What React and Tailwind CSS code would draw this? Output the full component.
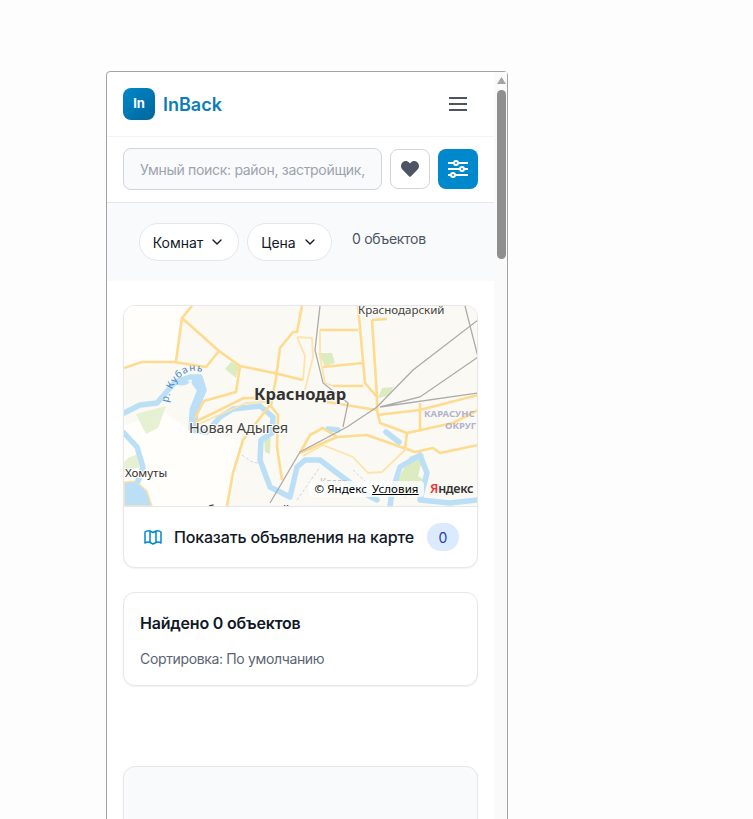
import React from "react";
import { ChevronDown } from "lucide-react";
import { FaHeart } from "react-icons/fa";

const FONT = "font-['Inter','Noto_Sans',sans-serif]";

const bigRoads = [
  "M0 62 L18 56 L50 56 L82 61 L95 45",
  "M68 0 L58 12 L52 55",
  "M58 12 L95 45 L116 60 L150 67 L179 74",
  "M178 0 L173 26 L169 26 L156 42 L152 72 L147 100",
  "M116 60 L112 86 L80 95 L71 112",
  "M234 0 L241 77 L253 91 L253 104 L203 96",
  "M234 24 L196 24 M239 57 L199 61",
  "M209 80 L239 80",
  "M248 14 L253 91 M248 14 L263 13",
  "M253 104 L256 117 L283 127 L329 117 L354 104",
  "M253 109 L296 104 L354 89",
  "M296 97 L296 124",
  "M283 127 L281 142",
  "M176 147 L186 129 L199 122 L213 131 L243 129 L291 146 L309 142 L316 147 L354 139",
  "M176 147 L213 131",
  "M146 99 L119 134 L109 167 L103 200",
  "M146 99 L154 109 L153 141 L158 174",
  "M143 92 L120 92 L71 116",
];

const thinRoads = [
  "M173 31 L188 32 L189 51 L181 84",
  "M173 31 L181 50 L179 74",
  "M196 24 L196 51 L201 77 L209 80",
  "M199 139 L229 151 L244 167 L258 166 L283 142",
  "M179 150 L199 139",
  "M75 118 L122 97 L143 96",
];

const rivers = [
  "M0 107 L16 99 L33 97 L51 76 L66 71 L76 71 L80 84 L70 104 L69 124 L83 126 L96 111 L109 103 L136 100 L149 111 L148 127 L137 134 L136 154 L146 181 L166 191 L173 161 L181 154 L196 154 L213 167 L240 187 L253 194",
  "M266 200 L268 186 L276 161 L296 149 L303 167 L296 194 L326 197 L354 194",
  "M0 127 L13 141 L19 161 L14 175",
  "M262 126 L275 136",
  "M204 123 L214 124",
];

const rails = [
  "M354 14 L289 64 L253 101 L223 121 L176 146 L146 197",
  "M354 51 L296 91 L256 101 L354 87",
  "M341 0 L354 51",
  "M196 0 L191 44 L199 77 L224 97 L219 121",
];

const CityMap = () => (
  <div className="relative h-[201px] overflow-hidden border-b border-[#e5e7eb]">
    <svg viewBox="0 0 354 200" className="block h-[200px] w-[354px]">
      <rect width="354" height="200" fill="#fbf9f4" />
      <path d="M0 0 H62 L52 56 L0 62 Z M0 120 L40 105 L70 128 L118 134 L105 200 H0 Z" fill="#fffefa" />
      <path d="M12 108 L42 100 L34 122 L22 128 Z M4 152 L16 147 L20 160 L0 166 V156 Z" fill="#e6f1d3" />
      <path d="M101 63 L107 56 L115 60 L112 72 Z M194 47 L208 47 L211 57 L201 60 Z M258 82 L270 81 L264 90 L254 92 Z M286 150 L300 148 L294 170 L303 176 L296 186 L280 192 L272 178 Z M140 132 L147 122 L146 148 L141 146 Z" fill="#dcecc0" />
      <path d="M0 176 L12 175 L23 185 L28 200 H0 Z" fill="#bbdff7" stroke="#fde3a8" strokeWidth="1.5" />
      {rivers.map((d) => (
        <path key={d} d={d} fill="none" stroke="#bbdff7" strokeWidth="5.5" strokeLinejoin="round" strokeLinecap="round" />
      ))}
      <path d="M72 76 L78 84 L70 104 L69 122" fill="none" stroke="#bbdff7" strokeWidth="9" strokeLinejoin="round" strokeLinecap="round" />
      <path d="M52 78 Q60 72 66 76 Q60 82 52 78 Z" fill="#bbdff7" />
      <path d="M118 149 L128 156 L140 158 M173 194 L196 161 M229 164 L244 178" fill="none" stroke="#d6cdec" strokeWidth="1" strokeDasharray="3 2" />
      {bigRoads.map((d) => (
        <path key={d} d={d} fill="none" stroke="#fedb8e" strokeWidth="2.6" strokeLinejoin="round" />
      ))}
      {thinRoads.map((d) => (
        <path key={d} d={d} fill="none" stroke="#fee3aa" strokeWidth="1.8" strokeLinejoin="round" />
      ))}
      {rails.map((d) => (
        <path key={d} d={d} fill="none" stroke="#adabaa" strokeWidth="1.3" />
      ))}
      <g fontFamily="'Noto Sans', sans-serif">
        <defs>
          <path id="kuban" d="M44 97 Q48 74 64 66 Q76 62 86 72" />
        </defs>
        <text fontSize="10" fill="#4a87c9" letterSpacing="0.8">
          <textPath href="#kuban">р. Кубань</textPath>
        </text>
        <text x="130" y="94" fontSize="16.5" fontWeight="700" fill="#333333" stroke="#fbf9f4" strokeWidth="2" paintOrder="stroke">Краснодар</text>
        <text x="65" y="127" fontSize="14.5" fill="#444444" stroke="#fffefa" strokeWidth="2" paintOrder="stroke">Новая Адыгея</text>
        <text x="1" y="171" fontSize="11.5" fill="#333333" stroke="#fffefa" strokeWidth="2" paintOrder="stroke">Хомуты</text>
        <text x="234" y="8" fontSize="11.5" fill="#444444" stroke="#fbf9f4" strokeWidth="2" paintOrder="stroke">Краснодарский</text>
        <text x="300" y="111" fontSize="9.5" fontWeight="700" fill="#b4b2cc">КАРАСУНС</text>
        <text x="321" y="123" fontSize="9.5" fontWeight="700" fill="#b4b2cc">ОКРУГ</text>
        <text x="196" y="180" fontSize="10" fill="#bcbcbc">Козет</text>
        <text x="73" y="210" fontSize="14.5" fill="#444444">Яблоновский</text>
      </g>
    </svg>
    <div className="absolute right-[53px] bottom-[9px] flex h-[16px] w-[115px] items-center justify-center gap-[5px] rounded-sm bg-white/80 font-['Noto_Sans',sans-serif] text-[11.5px] tracking-[0.1px] text-black">
      <span>© Яндекс</span>
      <span className="underline">Условия</span>
    </div>
    <div className="absolute right-[4px] bottom-[8px] font-['Noto_Sans',sans-serif] text-[12.5px] leading-[18px] font-semibold tracking-tight text-[#333333]">
      <span className="text-[#f0333c]">Я</span>ндекс
    </div>
  </div>
);

export default function App() {
  return (
    <div className={`h-screen overflow-hidden bg-[#fdfdfd] pt-[71px] pl-[106px] ${FONT}`}>
      <div className="flex h-[800px] w-[402px] rounded-t-[4px] border border-[#a3a3a3] bg-white">
        <div className="w-[387px] shrink-0">
          <header className="flex h-[65px] items-center justify-between border-b border-[#f3f4f6] pr-[24px] pl-[16px]">
            <div className="flex items-center gap-2">
              <div className="flex h-8 w-8 items-center justify-center rounded-lg bg-gradient-to-br from-[#0088cc] to-[#006699] text-[13px] font-bold text-white">
                In
              </div>
              <span className="text-[18px] font-semibold text-[#0b7db8]">InBack</span>
            </div>
            <svg width="24" height="24" viewBox="0 0 24 24" fill="none" stroke="#4b5563" strokeWidth="2">
              <path d="M3 6H21M3 12H21M3 18H21" />
            </svg>
          </header>

          <div className="flex h-[66px] items-start gap-2 border-b border-[#e5e7eb] px-[16px] pt-[11px] shadow-[0_1px_2px_rgba(0,0,0,0.04)]">
            <input
              readOnly
              placeholder="Умный поиск: район, застройщик,"
              className="h-[42px] w-[259px] rounded-lg border border-[#d1d5db] bg-[#f9fafb] pr-4 pl-4 text-[14px] tracking-[-0.3px] placeholder:text-[#9ca3af]"
            />
            <button className="mt-px flex h-10 w-10 items-center justify-center rounded-lg border border-[#d1d5db] bg-white">
              <FaHeart className="text-[18px] text-[#4b5563]" />
            </button>
            <button className="mt-px flex h-10 w-10 items-center justify-center rounded-lg bg-[#0088cc]">
              <svg width="20" height="20" viewBox="0 0 20 20" fill="#0088cc" stroke="white" strokeWidth="2">
                <path d="M0 4H20M0 10H20M0 16H20" />
                <circle cx="8" cy="4" r="2" />
                <circle cx="14" cy="10" r="2" />
                <circle cx="5" cy="16" r="2" />
              </svg>
            </button>
          </div>

          <div className="flex h-[78px] items-start gap-2 bg-[#f9fafb] pt-[20px] pl-[32px]">
            <button className="flex h-[38px] w-[100px] items-center justify-center gap-1.5 rounded-full border border-[#e5e7eb] bg-white text-[14px] text-[#111827]">
              Комнат
              <ChevronDown size={16} strokeWidth={2} />
            </button>
            <button className="flex h-[38px] w-[85px] items-center justify-center gap-1.5 rounded-full border border-[#e5e7eb] bg-white text-[14px] text-[#111827]">
              Цена
              <ChevronDown size={16} strokeWidth={2} />
            </button>
            <span className="mt-[5px] ml-3 text-[14px] tracking-[-0.3px] text-[#4b5563]">0 объектов</span>
          </div>

          <div className="flex flex-col px-[16px] pt-[24px]">
            <div className="overflow-hidden rounded-xl border border-[#e5e7eb] bg-white shadow-[0_1px_2px_rgba(0,0,0,0.06)]">
              <CityMap />
              <div className="flex h-[60px] items-center justify-between pr-[18px] pl-[20px]">
                <div className="flex items-center gap-3">
                  <svg width="18" height="18" viewBox="0 0 18 18" fill="none" stroke="#0088cc" strokeWidth="1.5" strokeLinejoin="round">
                    <path d="M1 4 Q3.5 2 6 3 L9 4.5 L12 3 Q14.5 2 17 4 V15 Q14.5 13.5 12 14.5 L9 16 L6 14.5 Q3.5 13.5 1 15 Z M6 3 V14.5 M12 3 V14.5" />
                  </svg>
                  <span className="text-[16px] font-medium tracking-[-0.17px] text-[#111827]">Показать объявления на карте</span>
                </div>
                <span className="flex h-7 w-8 items-center justify-center rounded-full bg-[#dbeafe] text-[14px] text-[#1e40af]">0</span>
              </div>
            </div>

            <div className="mt-[24px] flex h-[94px] flex-col gap-[13px] rounded-xl border border-[#e5e7eb] bg-white px-[16px] pt-[18px] shadow-[0_1px_2px_rgba(0,0,0,0.06)]">
              <h2 className="text-[16px] font-semibold tracking-[-0.2px] text-[#111827]">Найдено 0 объектов</h2>
              <p className="text-[14px] tracking-[-0.35px] text-[#5b6472]">Сортировка: По умолчанию</p>
            </div>

            <div className="mt-[80px] h-[200px] rounded-xl border border-[#e5e7eb] bg-[#f9fafb] shadow-[0_1px_2px_rgba(0,0,0,0.06)]" />
          </div>
        </div>

        <div className="flex flex-1 flex-col items-center bg-[#fafafa] pt-[5px] pl-px">
          <svg width="9" height="7" viewBox="0 0 9 7" fill="#a3a3a3">
            <path d="M4.5 0 L9 7 H0 Z" />
          </svg>
          <div className="mt-[6px] h-[169px] w-[9px] rounded-full bg-[#8f8f8f]" />
        </div>
      </div>
    </div>
  );
}
